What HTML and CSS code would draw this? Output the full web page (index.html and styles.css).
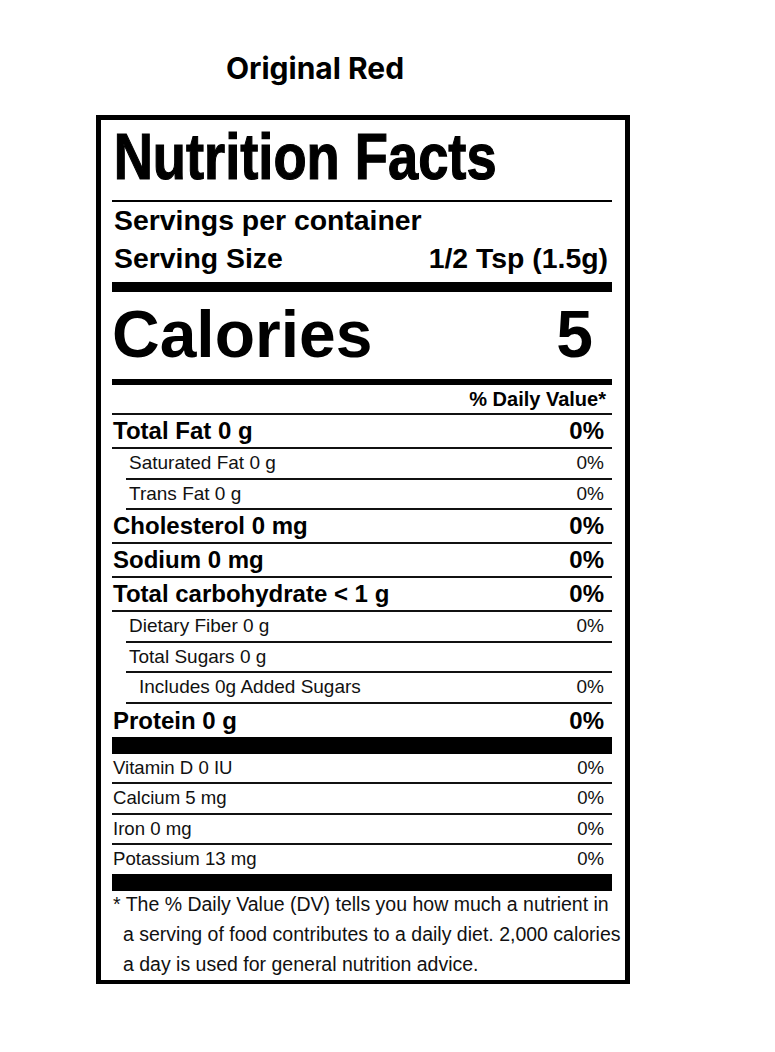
FILE: index.html
```html
<!DOCTYPE html>
<html lang="en">
<head>
<meta charset="utf-8">
<title>Original Red – Nutrition Facts</title>
<link rel="stylesheet" href="styles.css">
</head>
<body>
<div class="page">
  <h1 class="product">Original Red</h1>
  <section class="label">
    <h2 class="label-title"><span>Nutrition Facts</span></h2>
    <div class="servings">
      <div class="srv-row"><span>Servings per container</span></div>
      <div class="srv-row size"><span>Serving Size</span><span>1/2 Tsp (1.5g)</span></div>
    </div>
    <div class="calories"><span>Calories</span><span class="cal-num">5</span></div>
    <div class="dv-head">% Daily Value*</div>
    <div class="row major"><span>Total Fat 0 g</span><span>0%</span></div>
    <div class="row minor"><span>Saturated Fat 0 g</span><span>0%</span></div>
    <div class="row minor"><span>Trans Fat 0 g</span><span>0%</span></div>
    <div class="row major"><span>Cholesterol 0 mg</span><span>0%</span></div>
    <div class="row major"><span>Sodium 0 mg</span><span>0%</span></div>
    <div class="row major"><span>Total carbohydrate &lt; 1 g</span><span>0%</span></div>
    <div class="row minor"><span>Dietary Fiber 0 g</span><span>0%</span></div>
    <div class="row minor"><span>Total Sugars 0 g</span><span></span></div>
    <div class="row minor deep"><span>Includes 0g Added Sugars</span><span>0%</span></div>
    <div class="row major protein bar"><span>Protein 0 g</span><span>0%</span></div>
    <div class="row vit"><span>Vitamin D 0 IU</span><span>0%</span></div>
    <div class="row vit"><span>Calcium 5 mg</span><span>0%</span></div>
    <div class="row vit"><span>Iron 0 mg</span><span>0%</span></div>
    <div class="row vit bar"><span>Potassium 13 mg</span><span>0%</span></div>
    <p class="footnote">* The % Daily Value (DV) tells you how much a nutrient in<br>a serving of food contributes to a daily diet. 2,000 calories<br>a day is used for general nutrition advice.</p>
  </section>
</div>
</body>
</html>
```

FILE: styles.css
```css
html, body {
  margin: 0;
  background: #fff;
}

body {
  color: #000;
  font-family: "Liberation Sans", Arial, sans-serif;
}

.page {
  width: 630px;
}

.product {
  margin: 53px 0 0;
  text-align: center;
  font-family: Inter, "Open Sans", sans-serif;
  font-weight: 700;
  font-size: 30px;
  line-height: 31px;
  color: #000;
}

.label {
  margin: 31px 0 0 96px;
  width: 534px;
  box-sizing: border-box;
  border: 5px solid #000;
  border-bottom-width: 4px;
  padding: 4px 13px 0 11px;
}

.label-title {
  margin: 0;
  padding: 0 0 11px;
  border-bottom: 2px solid #000;
  font-size: 65px;
  line-height: 65px;
  font-weight: 700;
  white-space: nowrap;
}

.label-title span {
  display: inline-block;
  transform: scaleX(0.835);
  transform-origin: 0 50%;
  -webkit-text-stroke: 1.2px #000;
  padding-left: 2px;
}

.servings {
  border-bottom: 10px solid #000;
  padding-bottom: 4px;
  font-size: 28.4px;
  font-weight: 700;
}

.srv-row {
  display: flex;
  justify-content: space-between;
  line-height: 36px;
  padding: 0 4px 0 2px;
}

.srv-row.size {
  line-height: 40px;
}

.calories {
  display: flex;
  justify-content: space-between;
  align-items: center;
  font-size: 66px;
  line-height: 65px;
  font-weight: 700;
  padding: 10px 19px 12px 0;
  border-bottom: 6px solid #000;
}

.dv-head {
  text-align: right;
  font-size: 20px;
  line-height: 28px;
  font-weight: 700;
  padding-right: 6px;
  border-bottom: 2px solid #111;
}

.row {
  display: flex;
  justify-content: space-between;
  border-bottom: 2px solid #111;
  padding: 0 8px 0 1px;
  white-space: nowrap;
}

.row.major {
  font-size: 24px;
  line-height: 32px;
  font-weight: 700;
}

.row.minor {
  font-size: 19px;
  line-height: 28.5px;
  margin-left: 14px;
  padding-left: 3px;
  color: #111;
}

.row.minor.deep {
  padding-left: 13px;
}

.row.vit {
  font-size: 18.6px;
  line-height: 28.5px;
  color: #111;
}

.row.protein {
  line-height: 33px;
}

.row.bar {
  border-bottom: 17px solid #000;
}

.footnote {
  margin: -2px 0 0;
  font-size: 19.5px;
  line-height: 30px;
  padding: 0 0 1px 11px;
  text-indent: -10px;
  white-space: nowrap;
  color: #111;
}
```
